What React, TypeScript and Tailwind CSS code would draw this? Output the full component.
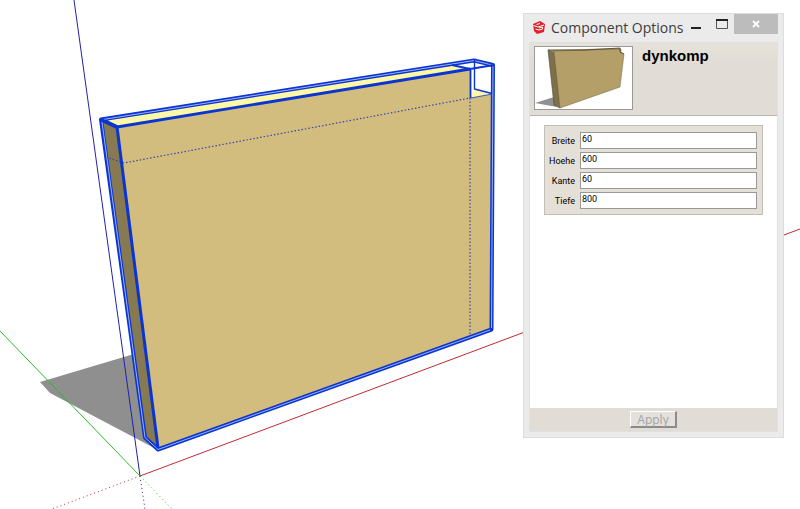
import { useState } from "react";

const initialOptions = [
    { name: "Breite", value: "60" },
    { name: "Hoehe", value: "600" },
    { name: "Kante", value: "60" },
    { name: "Tiefe", value: "800" }
];

function Viewport() {
    return (
        <svg
            className="absolute inset-0 h-full w-full"
            viewBox="0 0 800 509"
            preserveAspectRatio="xMinYMin slice"
            fill="none"
            role="img"
            aria-label="Model view"
        >
            {/* shadow on the ground */}
            <path d="M40 382 L134 354 L158 450 L50 393 Z" fill="#8f8f8f" />

            {/* board */}
            <path d="M101 119 L117 127 L158 449 L144 437 Z" fill="#877951" />
            <path d="M101 119 L474 60 L494 65 L470 69 L117 127 Z" fill="#fff8a6" />
            <path d="M117 127 L470 69 V98 L492 94 L491 330 L158 449 Z" fill="#d2bd7e" />
            <path d="M452 66 L474 60 L494 65 L492 94 L474 89 L470 97 V69 Z" fill="#fff" />
            <path d="M470 98 L474 89 L492 93.5 Z" fill="#fff8a6" />

            {/* hidden edges */}
            <path d="M106 157 L124 163 L470 98 M470 98 V336" stroke="#3346b0" strokeWidth="1.2" strokeDasharray="1.5 2" />

            {/* double edges of the bounding box: wide blue line with a light core */}
            <path
                d="M117 127 L101 119.5 L474 60.5 L493 65 L491.5 329.5 L158 449.5 L145 437.5 L101 119.5"
                stroke="#0a35d0"
                strokeWidth="4"
                strokeLinejoin="round"
            />
            <path
                d="M103 119.5 L474 60.5 L492 65 M493 66 L491.5 328 M490 330 L158 449.5 L145 437.5 L102 122"
                stroke="#9db3f8"
                strokeWidth="1"
            />

            {/* single selected edges */}
            <g stroke="#0a35d0" strokeLinejoin="round">
                <path d="M117 127 L470 69" strokeWidth="2.8" />
                <path d="M117 127 L158 448" strokeWidth="3" />
                <path d="M101 119 L117 127" strokeWidth="2.5" />
                <path d="M452 65 L470 69 L494 65 M470.5 69 V98" strokeWidth="1.8" />
                <path d="M474.5 60 V89 L492 93.5" strokeWidth="1.4" />
                <path d="M471 98 L492 94" strokeWidth="0.8" />
            </g>

            {/* axes */}
            <path d="M74 0 L140 476" stroke="#2020b0" />
            <path d="M140 476 L145 509" stroke="#2020b0" strokeDasharray="1 3" />
            <path d="M140 476 L800 229" stroke="#c22a32" />
            <path d="M140 476 L52 509" stroke="#c22a32" strokeDasharray="1 3" />
            <path d="M0 331 L140 476" stroke="#27bd27" />
            <path d="M140 476 L172 509" stroke="#27bd27" strokeDasharray="1 3" />
        </svg>
    );
}

function Logo() {
    return (
        <svg className="h-4 w-4 shrink-0" viewBox="0 0 16 16" fill="none" aria-hidden="true">
            <path d="M2 4 L9 1 L14 4 L13 12 L6 14 L3 11 Z" fill="#e5202b" />
            <path d="M2.5 5.5 L7 7 L13 5 M5.5 4.5 L9 3.5 M4.5 9 L8 10 L11.5 9 V7 L8 8" stroke="#fff" />
        </svg>
    );
}

function Thumbnail() {
    return (
        <svg className="h-16 w-[99px] shrink-0 border border-[#999999] bg-white" viewBox="0 0 97 62" aria-label="dynkomp preview" role="img">
            <path d="M0 56 L19 50 L22 60 Z" fill="#919191" />
            <path d="M13 3 L19 4 L25 61 L19 58 Z" fill="#80704a" stroke="#514a35" strokeWidth="0.6" />
            <path d="M13 3 L85 1 L86 6 L19 5 Z" fill="#b49f69" />
            <path d="M19 4 L86 2 L86 6 L89 7 L85 40 L25 61 Z" fill="#b49f69" stroke="#6d603e" strokeWidth="0.5" />
            <path d="M13 3 L50 3 L85 1 V5 L89 7" fill="none" stroke="#444032" strokeWidth="0.8" />
        </svg>
    );
}

export default function App() {
    const [options, setOptions] = useState(initialOptions);

    const changeOption = (name: string, value: string) => {
        setOptions((prev) => prev.map((option) => (option.name === name ? { ...option, value } : option)));
    };

    return (
        <main className="relative min-h-screen overflow-hidden bg-white font-['Open_Sans',sans-serif]">
            <Viewport />

            <section
                aria-label="Component Options"
                className="absolute top-[13px] right-4 w-[261px] border border-[#dcdcdc] bg-[#ebebeb] px-[5px] pb-[5px]"
            >
                <header className="flex h-7 items-start">
                    <div className="flex h-7 min-w-0 flex-1 items-center gap-1 pl-[2px]">
                        <Logo />
                        <h1 className="text-sm leading-5 whitespace-nowrap text-[#3c3c3c]">Component Options</h1>
                    </div>
                    <div className="flex shrink-0">
                        <button aria-label="Minimize" className="flex h-6 w-7 items-center justify-center">
                            <svg className="h-3 w-3" viewBox="0 0 12 12" aria-hidden="true">
                                <path d="M1 7 H11 V9 H1 Z" fill="#222" />
                            </svg>
                        </button>
                        <button aria-label="Maximize" className="flex h-5 w-6 items-center justify-center">
                            <svg className="h-3 w-3" viewBox="0 0 12 12" fill="none" aria-hidden="true">
                                <path d="M0.5 2 V10.5 H11.5 V2" stroke="#555" />
                                <path d="M0 1 H12 V3 H0 Z" fill="#222" />
                            </svg>
                        </button>
                        <button aria-label="Close" className="flex h-5 w-11 items-center justify-center bg-[#bcbcbc]">
                            <svg className="h-2 w-2" viewBox="0 0 8 8" aria-hidden="true">
                                <path d="M1 1 L7 7 M7 1 L1 7" stroke="#fff" strokeWidth="1.8" />
                            </svg>
                        </button>
                    </div>
                </header>

                <div className="border border-[#e0e0e0] bg-white">
                    <div className="flex gap-[9px] border-b border-[#b8b5ae] bg-linear-to-b from-[#e6e2d9] to-[#e1dcd5] to-30% px-1 pt-[3px] pb-[5px]">
                        <Thumbnail />
                        <h2 className="font-['Liberation_Sans',sans-serif] text-[15px] leading-5 font-bold text-black">dynkomp</h2>
                    </div>

                    <div className="min-h-[292px] px-[14px] pt-[9px]">
                        <form
                            id="options"
                            onSubmit={(e) => e.preventDefault()}
                            className="flex flex-col gap-[3px] border border-[#c2beb6] bg-[#e4e0d8] pt-[6px] pr-[5px] pb-[5px] pl-1 font-['Roboto',sans-serif]"
                        >
                            {options.map((option) => (
                                <div key={option.name} className="flex items-center gap-[5px]">
                                    <label htmlFor={option.name} className="w-[26px] flex-none text-right text-[9px] leading-4 text-black">
                                        {option.name}
                                    </label>
                                    <input
                                        id={option.name}
                                        value={option.value}
                                        onChange={(e) => changeOption(option.name, e.target.value)}
                                        className="h-[17px] min-w-0 flex-1 border border-[#999999] bg-white pb-1 pl-px text-[9px] leading-3 text-black outline-none"
                                    />
                                </div>
                            ))}
                        </form>
                    </div>

                    <footer className="flex justify-center bg-[#e1dcd5] py-[3px]">
                        <button
                            type="submit"
                            form="options"
                            disabled
                            className="h-[17px] w-[47px] border-t border-r-2 border-b-2 border-l border-t-white border-r-[#8b8b8b] border-b-[#8b8b8b] border-l-white bg-[#e4e1dc] text-xs leading-4 text-[#a5a5a5]"
                        >
                            Apply
                        </button>
                    </footer>
                </div>
            </section>
        </main>
    );
}
